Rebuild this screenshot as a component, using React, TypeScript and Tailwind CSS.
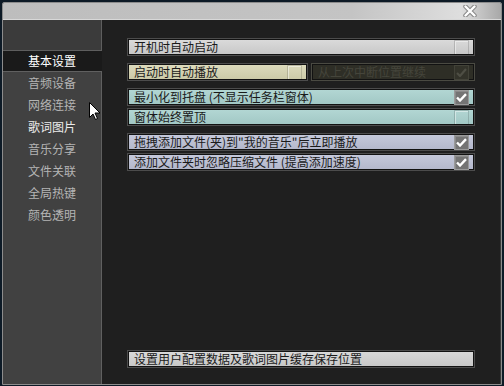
import React from "react";

const font = { fontFamily: '"Noto Sans CJK SC", "Noto Sans", sans-serif' };

function Check({ on, dim }: { on: boolean; dim?: boolean }) {
  if (dim) {
    return (
      <div className="w-[15px] h-[15px] border border-[#424238] bg-[#33332a] flex items-center justify-center">
        <svg width="11" height="9" viewBox="0 0 11 9">
          <path d="M1 5 L4 8 L10 1" fill="none" stroke="#4e4e44" strokeWidth="2.2" />
        </svg>
      </div>
    );
  }
  if (on) {
    return (
      <div className="w-[15px] h-[15px] border border-[#9a9a9a] bg-[#747474] flex items-center justify-center shadow-[inset_1px_1px_0_#8a8a8a]">
        <svg width="11" height="9" viewBox="0 0 11 9">
          <path d="M1 4.5 L4 7.5 L10 1.2" fill="none" stroke="#ffffff" strokeWidth="2.4" />
        </svg>
      </div>
    );
  }
  return (
    <div className="w-[15px] h-[15px] border border-black/15 shadow-[inset_1px_1px_0_rgba(255,255,255,0.45)]" />
  );
}

function Row({
  label,
  fill,
  on,
  noBox,
}: {
  label: string;
  fill: string;
  on?: boolean;
  noBox?: boolean;
}) {
  return (
    <div className="h-[18px] border border-[#4c4c4c] bg-[#121212] p-[1px]">
      <div className={`h-full flex items-center justify-between pl-[5px] pr-[4px] ${fill}`}>
        <span className="text-[12px] leading-none text-[#1a1a1a]">{label}</span>
        {!noBox && <Check on={!!on} />}
      </div>
    </div>
  );
}

export default function App() {
  const items = ["音频设备", "网络连接", "歌词图片", "音乐分享", "文件关联", "全局热键", "颜色透明"];
  return (
    <div className="w-[504px] h-[386px] bg-[#0d1a26] pt-[2px] px-[2px] pb-[1px] relative" style={font}>
      <div className="h-full border border-[#8c8c8c] flex flex-col rounded-tl-[2px] rounded-tr-[2px] overflow-hidden">
        <div className="h-[17px] shrink-0 bg-[linear-gradient(90deg,#bdbdbd_0%,#c4c4c4_70%,#dedede_92%,#a8a8a8_100%)] flex items-center justify-end pr-[24px] border-b border-[#d8d8d8]">
          <svg width="14" height="12" viewBox="0 0 14 12">
            <path d="M2.5 1.5 L11.5 10.5 M11.5 1.5 L2.5 10.5" stroke="#8a8a8a" strokeWidth="4.5" strokeLinecap="round" />
            <path d="M2.5 1.5 L11.5 10.5 M11.5 1.5 L2.5 10.5" stroke="#ffffff" strokeWidth="2.4" strokeLinecap="round" />
          </svg>
        </div>
        <div className="flex-1 flex min-h-0">
          <div className="w-[99px] shrink-0 flex flex-col">
            <div className="h-[31px] bg-[#3b3b3b] border-b border-r border-[#5e5e5e]" />
            <div className="h-[20px] bg-[#1a1a1a] flex items-center pl-[25px] text-[12px] text-white">基本设置</div>
            <div className="flex-1 bg-[#414141] border-t border-r border-[#606060] flex flex-col">
              {items.map((t) => (
                <div
                  key={t}
                  className={`h-[22px] flex items-center pl-[25px] text-[12px] ${t === "歌词图片" ? "text-[#ececec]" : "text-[#b4b4b4]"}`}
                >
                  {t}
                </div>
              ))}
            </div>
          </div>
          <div className="flex-1 bg-[#1f1f1f] pl-[25px] pr-[25px] pt-[18px] pb-[16px] flex flex-col border-r border-[#3a3a3a]">
            <Row label="开机时自动启动" fill="bg-[linear-gradient(#dadada,#c8c8c8)]" />
            <div className="mt-[7px] flex gap-[3px]">
              <div className="w-[181px]">
                <Row label="启动时自动播放" fill="bg-[linear-gradient(#dcdabc,#cccaa8)]" />
              </div>
              <div className="flex-1 h-[18px] border border-[#4a4a42] bg-[#121212] p-[1px]">
                <div className="h-full flex items-center justify-between pl-[5px] pr-[4px] bg-[#2e2e26]">
                  <span className="text-[12px] leading-none text-[#45453b]">从上次中断位置继续</span>
                  <Check on dim />
                </div>
              </div>
            </div>
            <div className="mt-[7px]">
              <Row label="最小化到托盘 (不显示任务栏窗体)" fill="bg-[linear-gradient(#b2d6d3,#a2c8c5)]" on />
            </div>
            <div className="mt-[2px]">
              <Row label="窗体始终置顶" fill="bg-[linear-gradient(#b2d6d3,#a2c8c5)]" />
            </div>
            <div className="mt-[7px]">
              <Row label={'拖拽添加文件(夹)到"我的音乐"后立即播放'} fill="bg-[linear-gradient(#c4c8da,#b4b8cc)]" on />
            </div>
            <div className="mt-[2px]">
              <Row label="添加文件夹时忽略压缩文件 (提高添加速度)" fill="bg-[linear-gradient(#c4c8da,#b4b8cc)]" on />
            </div>
            <div className="mt-auto">
              <Row label="设置用户配置数据及歌词图片缓存保存位置" fill="bg-[linear-gradient(#d8d8d8,#c8c8c8)]" noBox />
            </div>
          </div>
        </div>
      </div>
      <svg className="absolute left-[89px] top-[102px]" width="12" height="19" viewBox="0 0 12 19">
        <path d="M0.5 0.5 L0.5 15.5 L4 12 L6.5 17.5 L8.5 16.5 L6 11 L11 11 Z" fill="#ffffff" stroke="#000000" strokeWidth="1" />
      </svg>
    </div>
  );
}
